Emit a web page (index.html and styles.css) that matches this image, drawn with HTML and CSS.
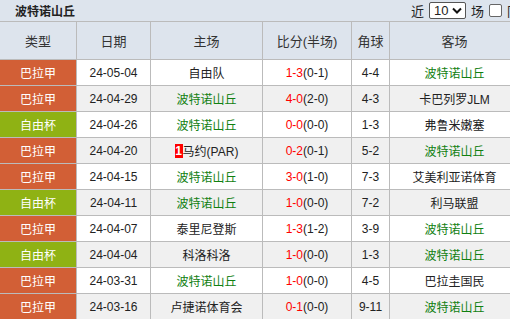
FILE: index.html
```html
<!DOCTYPE html>
<html lang="zh">
<head>
<meta charset="utf-8">
<link rel="stylesheet" href="styles.css">
</head>
<body>
<div class="bar">
  <div class="title">波特诺山丘</div>
  <div class="opts">
    <span>近</span>
    <span class="sel"><span class="selv">10</span><svg class="chev" width="10" height="7" viewBox="0 0 10 7"><path d="M1 1.5 L5 5.5 L9 1.5" fill="none" stroke="#111" stroke-width="2"/></svg></span>
    <span>场</span>
    <span class="chk"></span>
    <span>同主客</span>
  </div>
</div>
<table class="tbl">
  <colgroup>
    <col class="c1"><col class="c2"><col class="c3"><col class="c4"><col class="c5"><col class="c6">
  </colgroup>
  <thead>
    <tr><th>类型</th><th>日期</th><th>主场</th><th>比分(半场)</th><th>角球</th><th>客场</th></tr>
  </thead>
  <tbody>
    <tr><td class="lg bra">巴拉甲</td><td>24-05-04</td><td>自由队</td><td><span class="sc">1-3</span>(0-1)</td><td>4-4</td><td class="tm">波特诺山丘</td></tr>
    <tr class="alt"><td class="lg bra">巴拉甲</td><td>24-04-29</td><td class="tm">波特诺山丘</td><td><span class="sc">4-0</span>(2-0)</td><td>4-3</td><td>卡巴列罗JLM</td></tr>
    <tr><td class="lg cup">自由杯</td><td>24-04-26</td><td class="tm">波特诺山丘</td><td><span class="sc">0-0</span>(0-0)</td><td>1-3</td><td>弗鲁米嫩塞</td></tr>
    <tr class="alt"><td class="lg bra">巴拉甲</td><td>24-04-20</td><td><span class="rc">1</span>马约(PAR)</td><td><span class="sc">0-2</span>(0-1)</td><td>5-2</td><td class="tm">波特诺山丘</td></tr>
    <tr><td class="lg bra">巴拉甲</td><td>24-04-15</td><td class="tm">波特诺山丘</td><td><span class="sc">3-0</span>(1-0)</td><td>7-3</td><td>艾美利亚诺体育</td></tr>
    <tr class="alt"><td class="lg cup">自由杯</td><td>24-04-11</td><td class="tm">波特诺山丘</td><td><span class="sc">1-0</span>(0-0)</td><td>7-2</td><td>利马联盟</td></tr>
    <tr><td class="lg bra">巴拉甲</td><td>24-04-07</td><td>泰里尼登斯</td><td><span class="sc">1-3</span>(1-2)</td><td>3-9</td><td class="tm">波特诺山丘</td></tr>
    <tr class="alt"><td class="lg cup">自由杯</td><td>24-04-04</td><td>科洛科洛</td><td><span class="sc">1-0</span>(0-0)</td><td>1-3</td><td class="tm">波特诺山丘</td></tr>
    <tr><td class="lg bra">巴拉甲</td><td>24-03-31</td><td class="tm">波特诺山丘</td><td><span class="sc">1-0</span>(0-0)</td><td>4-5</td><td>巴拉圭国民</td></tr>
    <tr class="alt"><td class="lg bra">巴拉甲</td><td>24-03-16</td><td>卢捷诺体育会</td><td><span class="sc">0-1</span>(0-0)</td><td>9-11</td><td class="tm">波特诺山丘</td></tr>
  </tbody>
</table>
</body>
</html>
```
FILE: styles.css
```css
html, body {
  margin: 0;
  padding: 0;
  background: #fff;
  overflow: hidden;
}
body {
  width: 510px;
  height: 319px;
  font-family: "Liberation Sans", "Noto Sans CJK SC", sans-serif;
  color: #333;
}
.bar {
  display: flex;
  align-items: center;
  height: 21px;
  background: #dde4ed;
  border-bottom: 1px solid #bbb;
  white-space: nowrap;
  width: 520px;
}
.title {
  flex: 0 0 396px;
  padding-left: 15px;
  font-weight: bold;
  font-size: 12px;
  color: #222;
}
.opts {
  display: flex;
  align-items: center;
  gap: 5px;
  font-size: 13px;
  color: #222;
}
.sel {
  display: inline-flex;
  align-items: center;
  justify-content: space-between;
  box-sizing: border-box;
  width: 37px;
  height: 17px;
  border: 1px solid #555;
  border-radius: 2px;
  background: #fff;
  padding: 0 3px 0 4px;
  font-size: 13px;
}
.chk {
  display: inline-block;
  box-sizing: border-box;
  width: 13px;
  height: 13px;
  border: 1px solid #666;
  border-radius: 2px;
  background: #fff;
}
.tbl {
  border-collapse: separate;
  border-spacing: 0;
  table-layout: fixed;
  width: 520px;
}
.c1 { width: 77px; }
.c2 { width: 74px; }
.c3 { width: 112px; }
.c4 { width: 89px; }
.c5 { width: 38px; }
.c6 { width: 130px; }
th, td {
  padding: 0;
  text-align: center;
  border-right: 1px solid #bbb;
  border-bottom: 1px solid #bbb;
  white-space: nowrap;
  overflow: hidden;
}
th {
  height: 37px;
  background: #dde4ed;
  font-weight: normal;
  font-size: 13px;
  color: #333;
}
td {
  height: 25px;
  font-size: 12px;
  color: #222;
}
tr.alt td { background: #f0f0f0; }
td.lg { color: #fff; }
tr td.bra { background: #d25f36; }
tr td.cup { background: #8fb214; }
.tm { color: #108010; }
.sc { color: #f00; }
.rc {
  display: inline-block;
  background: #f00;
  color: #fff;
  font-weight: bold;
  width: 8px;
  height: 14px;
  line-height: 14px;
  font-size: 12px;
  vertical-align: middle;
  position: relative;
  top: -1px;
}
```
